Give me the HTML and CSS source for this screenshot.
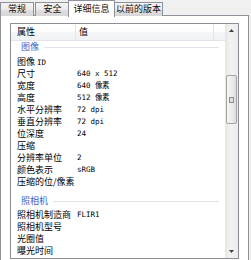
FILE: index.html
```html
<!DOCTYPE html>
<html lang="zh-CN">
<head>
<meta charset="utf-8">
<link rel="stylesheet" href="styles.css">
</head>
<body>
<div class="dialog">
  <div class="tabs">
    <div class="tab t1">常规</div>
    <div class="tab t2">安全</div>
    <div class="tab t3 active">详细信息</div>
    <div class="tab t4">以前的版本</div>
  </div>
  <div class="panel">
    <div class="list">
      <div class="content">
        <div class="header">
          <div class="hcol c1">属性</div>
          <div class="hcol c2">值</div>
          <div class="hcol c3"></div>
        </div>
        <div class="group first"><span class="glabel">图像</span><span class="gline"></span></div>
        <div class="row"><span class="name">图像 <span class="mono">ID</span></span><span class="val"></span></div>
        <div class="row"><span class="name">尺寸</span><span class="val">640 x 512</span></div>
        <div class="row"><span class="name">宽度</span><span class="val">640 像素</span></div>
        <div class="row"><span class="name">高度</span><span class="val">512 像素</span></div>
        <div class="row"><span class="name">水平分辨率</span><span class="val">72 dpi</span></div>
        <div class="row"><span class="name">垂直分辨率</span><span class="val">72 dpi</span></div>
        <div class="row"><span class="name">位深度</span><span class="val">24</span></div>
        <div class="row"><span class="name">压缩</span><span class="val"></span></div>
        <div class="row"><span class="name">分辨率单位</span><span class="val">2</span></div>
        <div class="row"><span class="name">颜色表示</span><span class="val">sRGB</span></div>
        <div class="row"><span class="name">压缩的位/像素</span><span class="val"></span></div>
        <div class="group"><span class="glabel">照相机</span><span class="gline"></span></div>
        <div class="row"><span class="name">照相机制造商</span><span class="val">FLIR1</span></div>
        <div class="row"><span class="name">照相机型号</span><span class="val"></span></div>
        <div class="row"><span class="name">光圈值</span><span class="val"></span></div>
        <div class="row"><span class="name">曝光时间</span><span class="val"></span></div>
      </div>
      <div class="scrollbar">
        <div class="arrow up"><svg width="5" height="3" viewBox="0 0 5 3"><path d="M0 3 L2.5 0 L5 3 Z" fill="#404040"/></svg></div>
        <div class="track">
          <div class="thumb"><span class="grip"></span></div>
        </div>
        <div class="arrow down"><svg width="5" height="3" viewBox="0 0 5 3"><path d="M0 0 L2.5 3 L5 0 Z" fill="#404040"/></svg></div>
      </div>
    </div>
  </div>
</div>
</body>
</html>
```
FILE: styles.css
```css
html, body {
  margin: 0;
  padding: 0;
}
body {
  width: 251px;
  height: 260px;
  overflow: hidden;
  background: #f0f0f0;
  font-family: "Noto Sans CJK SC", "Noto Sans", sans-serif;
  font-size: 9px;
  color: #000;
}
.dialog {
  width: 251px;
  height: 260px;
}
.tabs {
  display: flex;
  align-items: flex-end;
  height: 16px;
  position: relative;
  z-index: 2;
}
.tab {
  box-sizing: border-box;
  height: 14px;
  border: 1px solid #8e9199;
  border-bottom: none;
  background: linear-gradient(#f4f4f4, #ebebeb 50%, #e0e0e0 51%, #d6d6d6);
  line-height: 12px;
  text-align: center;
  white-space: nowrap;
  color: #111;
}
.t1 { width: 34px; }
.t2 { width: 35px; margin-left: 1px; }
.t3 { width: 47px; margin-left: -2px; }
.t4 { width: 49px; margin-left: -1px; }
.tab.active {
  height: 17px;
  margin-bottom: -1px;
  background: #fff;
  line-height: 15px;
  position: relative;
  z-index: 3;
}
.panel {
  box-sizing: border-box;
  width: 249px;
  height: 245px;
  margin-top: -1px;
  border: 1px solid #8e9199;
  border-bottom: none;
  background: #fff;
  padding: 7px 0 0 9px;
  position: relative;
  z-index: 1;
}
.list {
  box-sizing: border-box;
  width: 229px;
  height: 236px;
  border: 1px solid #8a8e96;
  display: flex;
  background: #fff;
}
.content {
  width: 214px;
  overflow: hidden;
}
.header {
  display: flex;
  height: 17px;
  box-sizing: border-box;
  border-bottom: 1px solid #e2e4e8;
  background: linear-gradient(#ffffff, #ffffff 45%, #f5f6f7 50%, #f1f2f4);
  line-height: 16px;
}
.hcol {
  box-sizing: border-box;
  border-right: 1px solid #e3e5e8;
}
.c1 { width: 65px; padding-left: 6px; }
.c2 { width: 138px; padding-left: 3px; }
.c3 { flex: 1; border-right: none; }
.group {
  display: flex;
  align-items: center;
  height: 21px;
  box-sizing: border-box;
  padding: 7px 0 2px 10px;
}
.group.first {
  height: 15px;
  padding: 0 0 3px 10px;
}
.glabel {
  color: #3b5fc8;
  line-height: 12px;
  white-space: nowrap;
}
.gline {
  height: 1px;
  width: 0;
  flex: 1;
  margin: 1px 6px 0 5px;
  background: #dfe3ea;
}
.row {
  display: flex;
  height: 12px;
  line-height: 12px;
  white-space: nowrap;
}
.name {
  box-sizing: border-box;
  width: 66px;
  padding-left: 6px;
}
.val, .mono {
  font-family: "DejaVu Sans Mono", "Liberation Mono", monospace;
  font-size: 7.5px;
}
.val {
  flex: 1;
}
.scrollbar {
  width: 13px;
  display: flex;
  flex-direction: column;
  background: linear-gradient(90deg, #e6e6e6, #f2f2f2 40%, #ececec);
}
.arrow {
  height: 13px;
  display: flex;
  align-items: center;
  justify-content: center;
}
.track {
  flex: 1;
  padding-top: 38px;
}
.thumb {
  box-sizing: border-box;
  width: 11px;
  height: 49px;
  margin-left: 1px;
  border: 1px solid #a3a3a3;
  border-radius: 2px;
  background: linear-gradient(90deg, #f7f7f7, #ececec 50%, #dedede);
  display: flex;
  align-items: center;
  justify-content: center;
}
.grip {
  width: 3px;
  height: 4px;
  border: 1px solid #8c8c8c;
  background: #e0e0e0;
}
```
